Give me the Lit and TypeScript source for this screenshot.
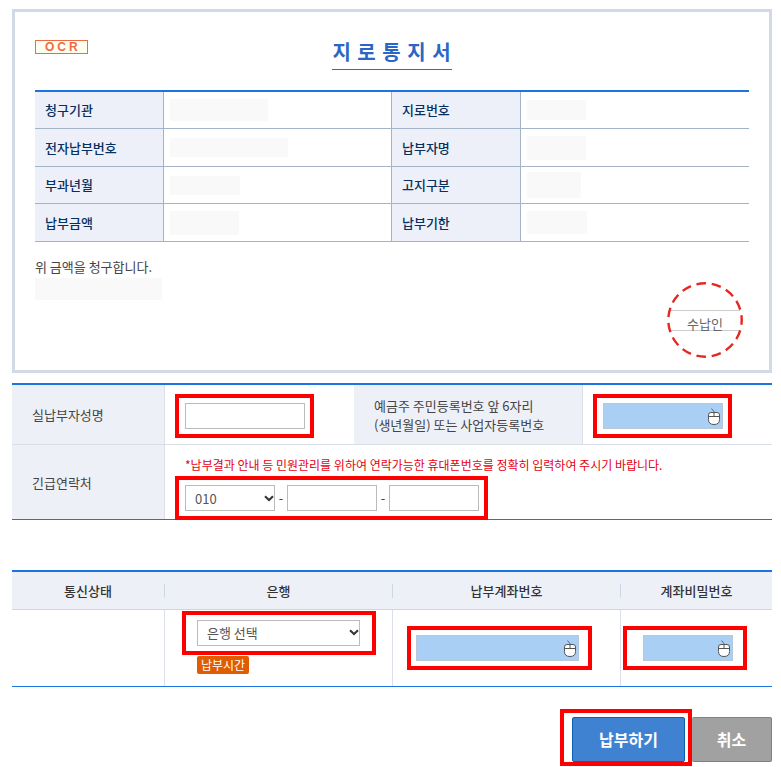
import { LitElement, html, css, svg } from "lit";
import { customElement, property } from "lit/decorators.js";
import { styleMap } from "lit/directives/style-map.js";

interface NoticeItem {
  label: string;
  width: number;
  height: number;
}

const noticeRows: NoticeItem[][] = [
  [
    { label: "청구기관", width: 98, height: 22 },
    { label: "지로번호", width: 59, height: 20 },
  ],
  [
    { label: "전자납부번호", width: 118, height: 19 },
    { label: "납부자명", width: 59, height: 24 },
  ],
  [
    { label: "부과년월", width: 70, height: 19 },
    { label: "고지구분", width: 54, height: 26 },
  ],
  [
    { label: "납부금액", width: 69, height: 24 },
    { label: "납부기한", width: 60, height: 23 },
  ],
];

const fontStack = css`"Noto Sans CJK KR", "Noto Sans", sans-serif`;

@customElement("secure-input")
export class SecureInput extends LitElement {
  @property() label = "";

  static styles = css`
    :host {
      display: block;
      position: relative;
    }
    .field {
      display: block;
      box-sizing: border-box;
      width: 100%;
      height: 26px;
      padding: 0 20px 0 6px;
      border: 1px solid #b8c8d8;
      border-radius: 0;
      background: #a9cff4;
      font: 13px ${fontStack};
    }
    .mouse {
      position: absolute;
      top: 5px;
      right: 3px;
      pointer-events: none;
    }
  `;

  render() {
    return html`
      <input class="field" type="password" aria-label=${this.label} />
      <svg class="mouse" width="12" height="18" viewBox="0 0 12 18" fill="none" aria-hidden="true">
        ${svg`
          <path d="M3.5 .5 L6 3.5 V6" stroke="#667" stroke-width="1" />
          <path d="M3 4.5 H9 Q11.5 4.5 11.5 7 V11.5 Q11.5 16.5 6 16.5 Q.5 16.5 .5 11.5 V7 Q.5 4.5 3 4.5 Z" fill="#fff" stroke="#555" stroke-width="1" />
          <path d="M1 8.5 H11 M6 4 V8.5" stroke="#555" stroke-width="1" />
        `}
      </svg>
    `;
  }
}

@customElement("app-root")
export class AppRoot extends LitElement {
  static styles = css`
    :host {
      display: block;
      padding: 9px 9px 1px 12px;
      background: #fff;
      color: #444;
      font: 13px/20px ${fontStack};
    }
    * {
      box-sizing: border-box;
    }
    table {
      width: 100%;
      border-collapse: separate;
      border-spacing: 0;
      table-layout: fixed;
    }
    th,
    td {
      padding: 0;
    }

    .notice {
      border: 3px solid #d2d9e7;
      padding: 26px 20px 12px;
    }
    .head {
      display: grid;
      grid-template-columns: 1fr auto 1fr;
      align-items: start;
      margin-bottom: 20px;
    }
    .ocr {
      justify-self: start;
      margin-top: 2px;
      padding: 0 6px 0 9px;
      border: 1px solid #ee6a45;
      background: #fffff0;
      color: #ee6a45;
      font: bold 12px/12px "Liberation Sans", sans-serif;
      letter-spacing: 3px;
    }
    .title {
      margin: 0;
      padding-bottom: 3px;
      border-bottom: 1px solid #2a6cc8;
      color: #2a66c4;
      font-size: 20px;
      line-height: 28px;
      font-weight: 700;
      letter-spacing: 1px;
    }
    .notice-table {
      border-top: 2px solid #1b74e0;
    }
    .notice-table th {
      width: 18%;
      height: 37px;
      padding-left: 10px;
      background: #eef0f9;
      color: #06305f;
      font-weight: 500;
      text-align: left;
    }
    .notice-table tr:nth-child(even) th {
      height: 38px;
    }
    .notice-table td {
      width: 32%;
      padding-left: 6px;
    }
    .notice-table th,
    .notice-table td {
      border-right: 1px solid #a3b3c8;
      border-bottom: 1px solid #a3b3c8;
    }
    .notice-table td:last-child {
      border-right: 0;
    }
    .masked {
      display: block;
      background: #f9f9f9;
    }
    .foot {
      display: flex;
      justify-content: space-between;
      padding: 15px 6px 0 0;
    }
    .claim {
      margin: 0 0 1px;
    }
    .stamp {
      display: grid;
      place-items: center;
      margin-top: 25px;
      color: #666;
    }
    .stamp > * {
      grid-area: 1 / 1;
    }
    .stamp-text {
      padding-top: 8px;
    }

    .form-table {
      margin-top: 10px;
      border-top: 2px solid #1b74e0;
      border-bottom: 1px solid #1b74e0;
    }
    .form-table th {
      padding: 0 20px;
      background: #eef0f8;
      font-weight: 400;
      line-height: 19px;
      text-align: left;
      white-space: nowrap;
    }
    .form-table td {
      padding: 9px 10px 6px;
      border-left: 1px solid #dcdfe9;
    }
    .form-table .contact {
      padding: 10px 10px 0;
    }
    .form-table tr:first-child > * {
      border-bottom: 1px solid #d9dde6;
    }
    .c20 {
      width: 20%;
    }
    .c25 {
      width: 25%;
    }
    .c30 {
      width: 30%;
    }
    .note {
      margin: 0;
      padding: 0 0 1px 10px;
      color: #e60012;
      font-size: 12px;
      white-space: nowrap;
    }

    .mark {
      display: flex;
      align-items: center;
      position: relative;
      width: fit-content;
      height: 44px;
      padding: 0 5px 0 6px;
      border: 4px solid #f00;
    }
    .mark.phone {
      margin-bottom: -1px;
    }
    .mark.bank {
      margin-left: 17px;
      padding: 0 12px 0 11px;
    }
    .mark.account {
      margin-left: 14px;
      padding: 0 9px 0 5px;
    }
    .mark.pin {
      margin-left: 2px;
      padding: 0 10px 0 16px;
    }
    .text,
    select {
      height: 26px;
      border: 1px solid #bbb;
      border-radius: 0;
      background: #fff;
      color: #555;
      font: 13px ${fontStack};
    }
    select {
      appearance: none;
      padding: 0 14px 0 9px;
      background: #fff
        url("data:image/svg+xml,%3Csvg xmlns='http://www.w3.org/2000/svg' width='10' height='7' fill='none'%3E%3Cpath d='M1 1.2 L5 5 L9 1.2' stroke='%23333' stroke-width='2'/%3E%3C/svg%3E")
        no-repeat right center;
    }
    .w120 {
      width: 120px;
    }
    .w90 {
      width: 90px;
    }
    .w163 {
      width: 163px;
    }
    .dash {
      width: 12px;
      text-align: center;
    }

    .pay-table {
      margin-top: 50px;
      border-top: 2px solid #1b74e0;
      border-bottom: 1px solid #1b74e0;
    }
    .pay-table th {
      height: 38px;
      border-bottom: 1px solid #ccd5e8;
      background: #eef0f8;
      color: #333;
      font-weight: 500;
    }
    .head-label {
      display: block;
      border-left: 1px solid #ccd8ea;
      line-height: 14px;
    }
    .pay-table td {
      height: 76px;
      border-left: 1px solid #dcdfe9;
    }
    .pay-table th:first-child .head-label,
    .pay-table td:first-child {
      border-left: 0;
    }
    .hours {
      display: block;
      height: 18px;
      margin: 1px 0 12px 32px;
      padding: 0 4px;
      border: 0;
      border-radius: 2px;
      background: #e05c00;
      color: #fff;
      font: 12px/18px ${fontStack};
    }

    .actions {
      display: flex;
      justify-content: flex-end;
      align-items: flex-end;
      margin-top: 22px;
    }
    .mark.submit {
      height: auto;
      padding: 4px 3px 0 8px;
    }
    .btn {
      height: 45px;
      padding: 0 0 2px;
      border: 1px solid #808080;
      border-radius: 2px;
      background: #a1a1a1;
      color: #fff;
      font: bold 16px ${fontStack};
    }
    .pay {
      width: 113px;
      border-color: #0c60b0;
      background: #4082d2;
    }
    .cancel {
      width: 80px;
      margin-bottom: 4px;
      border-left: 0;
    }
  `;

  private renderNotice() {
    return html`
      <section class="notice">
        <header class="head">
          <span class="ocr">OCR</span>
          <h1 class="title">지 로 통 지 서</h1>
        </header>
        <table class="notice-table">
          <tbody>
            ${noticeRows.map(
              (row) => html`<tr>
                ${row.map(
                  (item) => html`
                    <th scope="row">${item.label}</th>
                    <td>
                      <span
                        class="masked"
                        style=${styleMap({ width: `${item.width}px`, height: `${item.height}px` })}
                      ></span>
                    </td>
                  `
                )}
              </tr>`
            )}
          </tbody>
        </table>
        <div class="foot">
          <div>
            <p class="claim">위 금액을 청구합니다.</p>
            <span class="masked" style=${styleMap({ width: "127px", height: "22px" })}></span>
          </div>
          <div class="stamp">
            <svg width="76" height="76" viewBox="0 0 76 76" fill="none" aria-hidden="true">
              <path d="M4 28.5 H73 M4 48.5 H73" stroke="#ccc" />
              <circle
                cx="38" cy="38" r="36.7" pathLength="360"
                stroke="#e6271f" stroke-width="2.4" stroke-linecap="butt"
                stroke-dasharray="15 9" stroke-dashoffset="7.5"
              />
            </svg>
            <span class="stamp-text">수납인</span>
          </div>
        </div>
      </section>
    `;
  }

  private renderPayer() {
    return html`
      <table class="form-table">
        <colgroup>
          <col class="c20" /><col class="c25" /><col class="c30" /><col class="c25" />
        </colgroup>
        <tbody>
          <tr>
            <th scope="row"><label for="payer">실납부자성명</label></th>
            <td>
              <div class="mark"><input class="text w120" id="payer" type="text" /></div>
            </td>
            <th scope="row">예금주 주민등록번호 앞 6자리<br />(생년월일) 또는 사업자등록번호</th>
            <td>
              <div class="mark">
                <secure-input class="w120" label="예금주 주민등록번호 앞 6자리"></secure-input>
              </div>
            </td>
          </tr>
          <tr>
            <th scope="row"><label for="phone">긴급연락처</label></th>
            <td class="contact" colspan="3">
              <p class="note">
                *납부결과 안내 등 민원관리를 위하여 연락가능한 휴대폰번호를 정확히 입력하여 주시기 바랍니다.
              </p>
              <div class="mark phone">
                <select class="w90" id="phone"><option>010</option></select>
                <span class="dash">-</span>
                <input class="text w90" type="text" aria-label="긴급연락처" />
                <span class="dash">-</span>
                <input class="text w90" type="text" aria-label="긴급연락처" />
              </div>
            </td>
          </tr>
        </tbody>
      </table>
    `;
  }

  private renderAccount() {
    return html`
      <table class="pay-table">
        <colgroup>
          <col class="c20" /><col class="c30" /><col class="c30" /><col class="c20" />
        </colgroup>
        <thead>
          <tr>
            <th scope="col"><span class="head-label">통신상태</span></th>
            <th scope="col"><label class="head-label" for="bank">은행</label></th>
            <th scope="col"><span class="head-label">납부계좌번호</span></th>
            <th scope="col"><span class="head-label">계좌비밀번호</span></th>
          </tr>
        </thead>
        <tbody>
          <tr>
            <td></td>
            <td>
              <div class="mark bank">
                <select class="w163" id="bank"><option>은행 선택</option></select>
              </div>
              <button class="hours" type="button">납부시간</button>
            </td>
            <td>
              <div class="mark account">
                <secure-input class="w163" label="납부계좌번호"></secure-input>
              </div>
            </td>
            <td>
              <div class="mark pin">
                <secure-input class="w90" label="계좌비밀번호"></secure-input>
              </div>
            </td>
          </tr>
        </tbody>
      </table>
    `;
  }

  render() {
    return html`
      ${this.renderNotice()} ${this.renderPayer()} ${this.renderAccount()}
      <div class="actions">
        <div class="mark submit"><button class="btn pay" type="button">납부하기</button></div>
        <button class="btn cancel" type="button">취소</button>
      </div>
    `;
  }
}
